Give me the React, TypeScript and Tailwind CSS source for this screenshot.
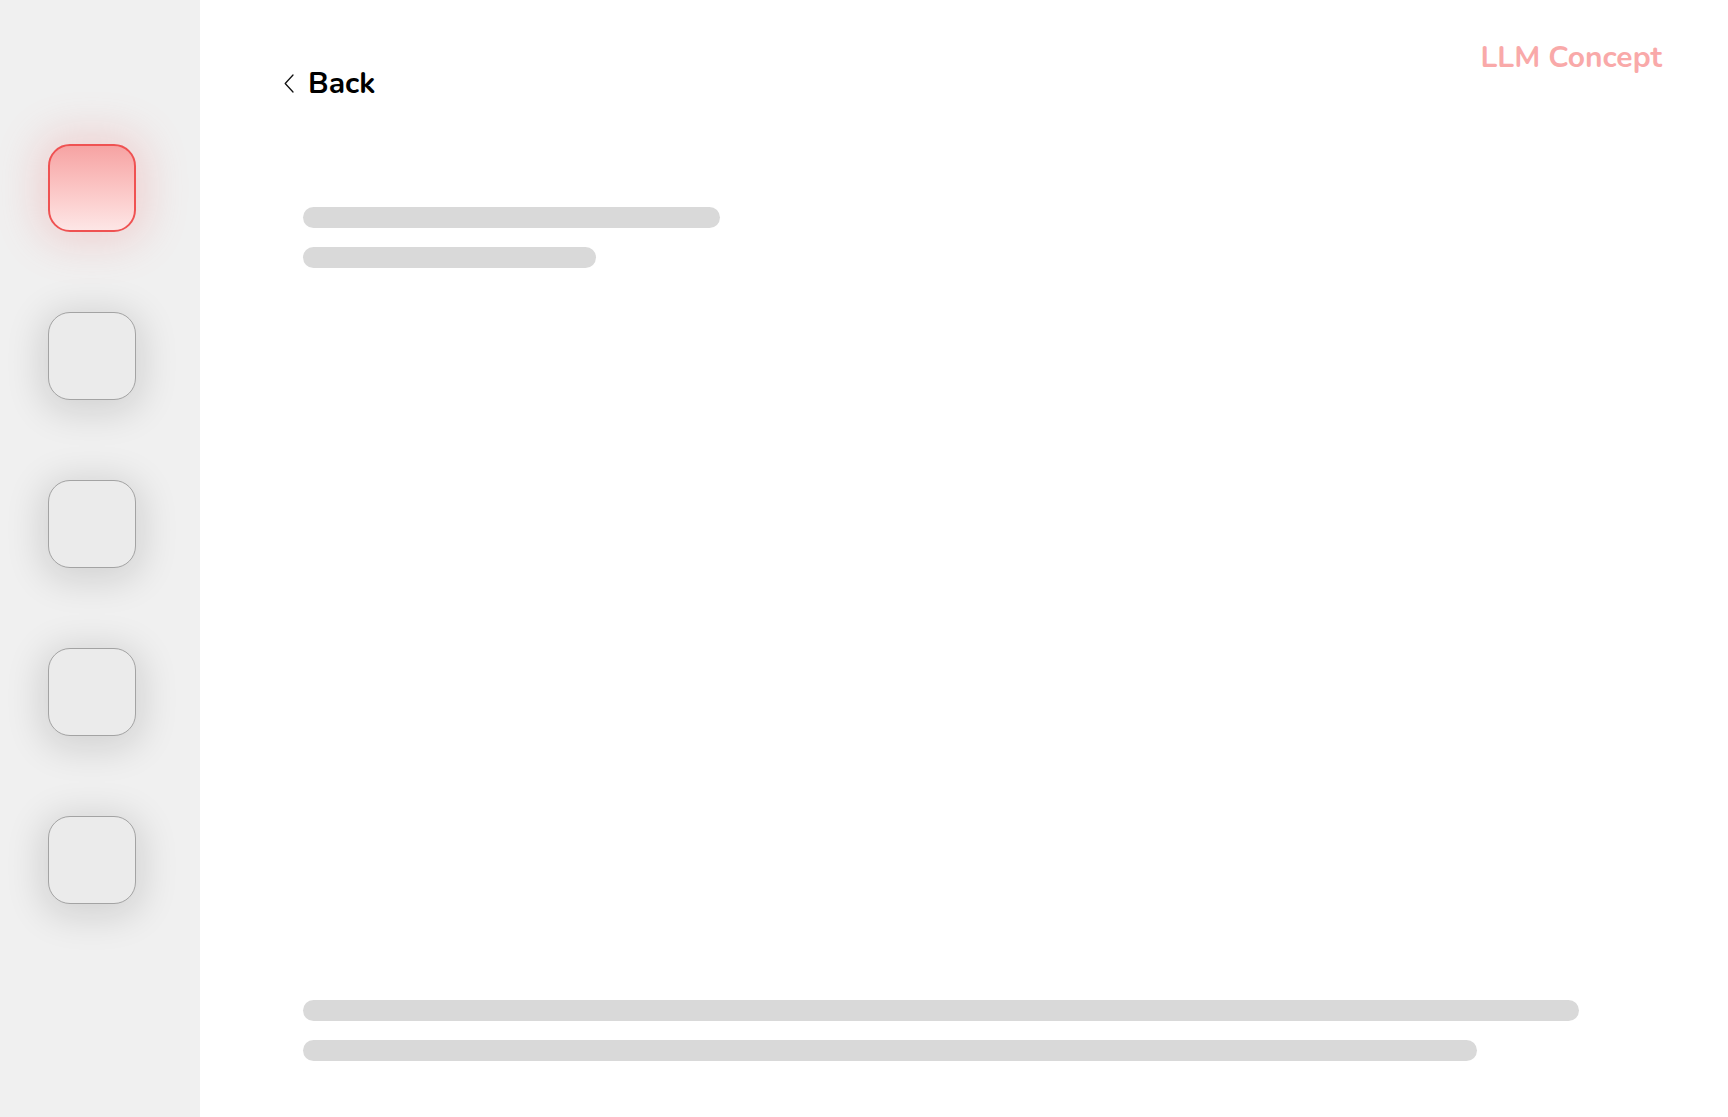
import React from "react";

function NavBox({ active }: { active?: boolean }) {
  if (active) {
    return (
      <div className="w-[88px] h-[88px] rounded-[22px] border-2 border-[#ef5252] bg-gradient-to-b from-[#f6a3a3] to-[#fde6e6] shadow-[0_0_40px_12px_rgba(239,110,110,0.22)]" />
    );
  }
  return (
    <div className="w-[88px] h-[88px] rounded-[22px] border border-[#a3a3a3] bg-[#ebebeb] shadow-[0_6px_36px_8px_rgba(0,0,0,0.12)]" />
  );
}

export default function App() {
  return (
    <div
      className="flex w-full h-screen bg-white overflow-hidden"
      style={{ fontFamily: "Nunito, Lato, 'Open Sans', sans-serif" }}
    >
      <aside className="w-[200px] shrink-0 bg-[#f0f0f0] flex flex-col pl-[48px] pt-[144px] gap-[80px]">
        <NavBox active />
        <NavBox />
        <NavBox />
        <NavBox />
        <NavBox />
      </aside>
      <main className="flex-1 flex flex-col pl-[84px] pr-[66px] pt-[40px] pb-[56px]">
        <header className="flex items-start justify-between">
          <button className="mt-[29px] flex items-center gap-[14px] text-black">
            <svg width="10" height="19" viewBox="0 0 10 19" fill="none" className="-mt-[1px]">
              <path d="M9 1L1.2 9.5L9 18" stroke="#111" strokeWidth="1.3" strokeLinecap="round" strokeLinejoin="round" />
            </svg>
            <span className="text-[30px] leading-none font-bold">Back</span>
          </button>
          <div className="mt-[3px] text-[30px] leading-none font-bold text-[#f9a9a9]">LLM Concept</div>
        </header>
        <div className="pl-[19px] mt-[108px] flex flex-col gap-[19px]">
          <div className="w-[417px] h-[21px] rounded-full bg-[#d9d9d9]" />
          <div className="w-[293px] h-[21px] rounded-full bg-[#d9d9d9]" />
        </div>
        <div className="flex-1" />
        <div className="pl-[19px] flex flex-col gap-[19px]">
          <div className="w-[1276px] h-[21px] rounded-full bg-[#d9d9d9]" />
          <div className="w-[1174px] h-[21px] rounded-full bg-[#d9d9d9]" />
        </div>
      </main>
    </div>
  );
}
